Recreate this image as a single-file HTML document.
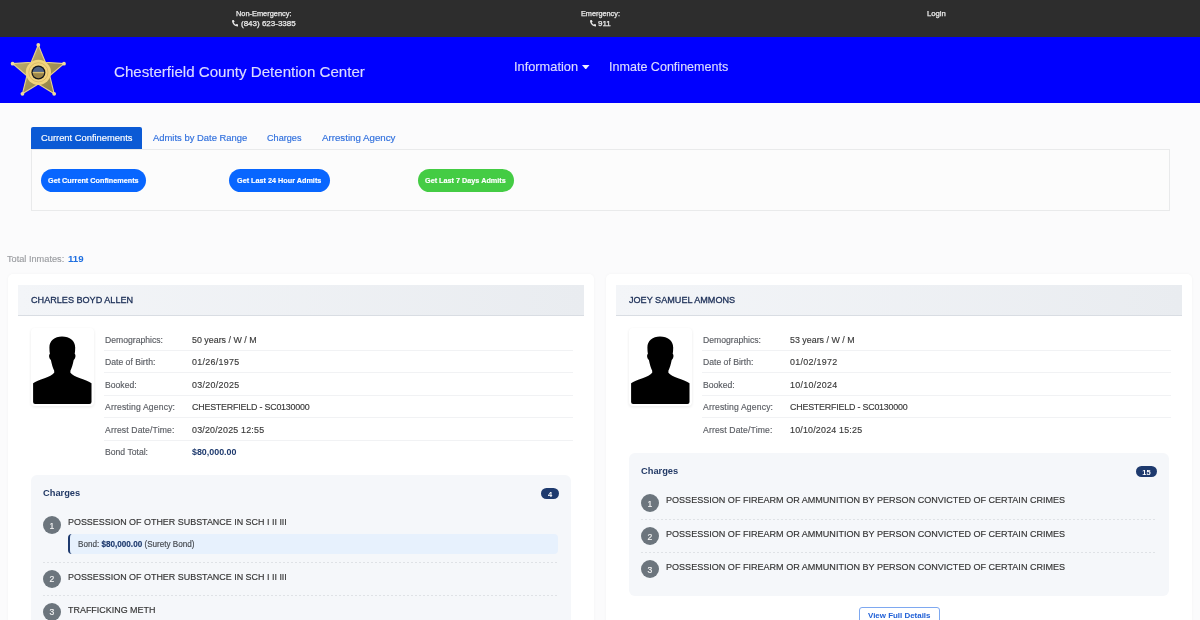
<!DOCTYPE html>
<html><head><meta charset="utf-8"><style>
html,body{margin:0;padding:0;width:1200px;height:620px;overflow:hidden;background:#fbfbfc;font-family:"Liberation Sans", sans-serif}
.t{position:absolute;white-space:nowrap;line-height:1;will-change:transform}
.r{position:absolute;display:block}
b{font-weight:700}
</style></head><body>
<div class="r" style="left:0px;top:0px;width:1200px;height:37px;background:#2d2d2d"></div>
<div class="t" style="left:235.80px;top:10px;font-size:7.4px;color:#ececec;font-weight:400;-webkit-text-stroke:0.15px currentColor;-webkit-text-stroke:0.25px currentColor">Non-Emergency:</div>
<svg class="r" style="left:231.7px;top:20.0px" width="6.5" height="6.5" viewBox="0 0 512 512"><path fill="#e8e8e8" d="M497.4 361.8l-112-48a24 24 0 0 0-28 6.9l-49.6 60.6A370.7 370.7 0 0 1 130.6 204.1l60.6-49.6a23.9 23.9 0 0 0 6.9-28l-48-112A24.2 24.2 0 0 0 122.6.6l-104 24A24 24 0 0 0 0 48c0 256.5 207.9 464 464 464a24 24 0 0 0 23.4-18.6l24-104a24.3 24.3 0 0 0-14-27.6z"/></svg>
<div class="t" style="left:240.80px;top:20px;font-size:8.0px;color:#ececec;font-weight:400;-webkit-text-stroke:0.15px currentColor;-webkit-text-stroke:0.25px currentColor">(843) 623-3385</div>
<div class="t" style="left:580.80px;top:10px;font-size:7.3px;color:#ececec;font-weight:400;-webkit-text-stroke:0.15px currentColor;-webkit-text-stroke:0.25px currentColor">Emergency:</div>
<svg class="r" style="left:589.6px;top:20.0px" width="6.5" height="6.5" viewBox="0 0 512 512"><path fill="#e8e8e8" d="M497.4 361.8l-112-48a24 24 0 0 0-28 6.9l-49.6 60.6A370.7 370.7 0 0 1 130.6 204.1l60.6-49.6a23.9 23.9 0 0 0 6.9-28l-48-112A24.2 24.2 0 0 0 122.6.6l-104 24A24 24 0 0 0 0 48c0 256.5 207.9 464 464 464a24 24 0 0 0 23.4-18.6l24-104a24.3 24.3 0 0 0-14-27.6z"/></svg>
<div class="t" style="left:598.00px;top:20px;font-size:8.0px;color:#ececec;font-weight:400;-webkit-text-stroke:0.15px currentColor;-webkit-text-stroke:0.25px currentColor">911</div>
<div class="t" style="left:927.00px;top:10px;font-size:7.7px;color:#ececec;font-weight:400;-webkit-text-stroke:0.15px currentColor;-webkit-text-stroke:0.25px currentColor">Login</div>
<div class="r" style="left:0px;top:37px;width:1200px;height:66px;background:#0000ff"></div>
<svg class="r" style="left:0px;top:37px" width="80" height="66" viewBox="0 37 80 66">
<defs><linearGradient id="gg" x1="0" y1="0" x2="1" y2="1"><stop offset="0" stop-color="#c9b878"/><stop offset="0.5" stop-color="#a8985a"/><stop offset="1" stop-color="#8a7a40"/></linearGradient></defs>
<polygon points="38.30,45.00 45.35,62.29 63.98,63.66 49.71,75.71 54.17,93.84 38.30,84.00 22.43,93.84 26.89,75.71 12.62,63.66 31.25,62.29" fill="url(#gg)" stroke="#e6d08e" stroke-width="1.1" stroke-linejoin="round"/>
<circle cx="38.30" cy="45.00" r="1.9" fill="#eedc9c"/><circle cx="63.98" cy="63.66" r="1.9" fill="#eedc9c"/><circle cx="54.17" cy="93.84" r="1.9" fill="#eedc9c"/><circle cx="22.43" cy="93.84" r="1.9" fill="#eedc9c"/><circle cx="12.62" cy="63.66" r="1.9" fill="#eedc9c"/>
<circle cx="38.4" cy="72.3" r="12.6" fill="#f2d47c"/>
<circle cx="38.4" cy="72.3" r="9.6" fill="none" stroke="#c9a95a" stroke-width="0.6"/>
<circle cx="38.4" cy="72.5" r="7" fill="#15171c"/>
<path d="M32.7 72.5 A5.7 5.7 0 0 1 44.1 72.5 Z" fill="#4d6186"/>
<path d="M32.7 72.5 A5.7 5.7 0 0 0 44.1 72.5 Z" fill="#9c8648"/>
<rect x="32.7" y="71.9" width="11.4" height="1.3" fill="#d8c070"/>
</svg>
<div class="t" style="left:113.75px;top:64px;font-size:15.1px;color:#dcdcff;font-weight:400;-webkit-text-stroke:0.15px currentColor;">Chesterfield County Detention Center</div>
<div class="t" style="left:514.30px;top:61px;font-size:12.8px;color:#dcdcff;font-weight:400;-webkit-text-stroke:0.15px currentColor;">Information</div>
<svg class="r" style="left:582px;top:64.8px" width="7.5" height="4.5" viewBox="0 0 7.5 4.5"><polygon points="0,0 7.5,0 3.75,4.5" fill="#f0f0ff"/></svg>
<div class="t" style="left:608.80px;top:61px;font-size:12.55px;color:#dcdcff;font-weight:400;-webkit-text-stroke:0.15px currentColor;">Inmate Confinements</div>
<div class="r" style="left:0px;top:103px;width:1200px;height:517px;background:#fbfbfc"></div>
<div class="r" style="left:31px;top:149px;width:1139px;height:62px;background:#fcfcfc;border:1px solid #e9eaeb;box-sizing:border-box"></div>
<div class="r" style="left:31px;top:127px;width:111px;height:22px;background:#0b5ad5;border-radius:2px 2px 0 0"></div>
<div class="t" style="left:40.80px;top:134px;font-size:9.35px;color:#ffffff;font-weight:400;-webkit-text-stroke:0.15px currentColor;">Current Confinements</div>
<div class="t" style="left:152.80px;top:133px;font-size:9.44px;color:#2f6fdd;font-weight:400;-webkit-text-stroke:0.15px currentColor;">Admits by Date Range</div>
<div class="t" style="left:267.20px;top:134px;font-size:9.13px;color:#2f6fdd;font-weight:400;-webkit-text-stroke:0.15px currentColor;">Charges</div>
<div class="t" style="left:322.00px;top:133px;font-size:9.72px;color:#2f6fdd;font-weight:400;-webkit-text-stroke:0.15px currentColor;">Arresting Agency</div>
<div class="r" style="left:41px;top:168.5px;width:105px;height:23px;background:#0866ff;border-radius:11.5px"></div>
<div class="t" style="left:48.10px;top:177px;font-size:7.25px;color:#ffffff;font-weight:700;-webkit-text-stroke:0.15px currentColor">Get Current Confinements</div>
<div class="r" style="left:229px;top:168.5px;width:101px;height:23px;background:#0866ff;border-radius:11.5px"></div>
<div class="t" style="left:236.90px;top:177px;font-size:7.25px;color:#ffffff;font-weight:700;-webkit-text-stroke:0.15px currentColor">Get Last 24 Hour Admits</div>
<div class="r" style="left:418px;top:168.5px;width:96px;height:23px;background:#44cc44;border-radius:11.5px"></div>
<div class="t" style="left:425.00px;top:177px;font-size:7.25px;color:#ffffff;font-weight:700;-webkit-text-stroke:0.15px currentColor">Get Last 7 Days Admits</div>
<div class="t" style="left:7.30px;top:255px;font-size:9.2px;color:#9a9ca0;font-weight:400;-webkit-text-stroke:0.15px currentColor;">Total Inmates:</div>
<div class="t" style="left:68.30px;top:254px;font-size:9.7px;color:#1f6fe0;font-weight:700;">119</div>
<div class="r" style="left:8px;top:274px;width:586px;height:366px;background:#fff;border-radius:5px;box-shadow:0 0 3px rgba(0,0,0,0.04)"></div>
<div class="r" style="left:18px;top:285px;width:566px;height:31px;background:linear-gradient(90deg,#f3f5f8,#e9ecf0);border-bottom:1px solid #d9dde3;box-sizing:border-box"></div>
<div class="t" style="left:31.00px;top:296px;font-size:9.1px;color:#1c2f57;font-weight:400;-webkit-text-stroke:0.15px currentColor;-webkit-text-stroke:0.3px currentColor">CHARLES BOYD ALLEN</div>
<div class="r" style="left:30.5px;top:328px;width:63px;height:78px;background:#fff;border-radius:4px;box-shadow:0 1px 3px rgba(0,0,0,0.09)"><svg width="63" height="78" viewBox="0 0 63 78"><path fill="#000" d="M31 8.6 C23.6 8.6 18.4 13 18.4 19.5 C18.4 22 18.6 24 18.9 26 C17.6 26.5 17.9 30.5 19.9 32 C20.7 36.2 21.9 40 23.2 42.8 L23.2 44.8 C21.5 47.2 18 48.5 13.5 50.2 C8.5 52 4.5 53.4 2.1 55.2 L2.1 74 Q2.1 76 4.1 76 L58.5 76 Q60.5 76 60.5 74 L60.5 55.2 C58.1 53.4 54.1 52 49.1 50.2 C44.6 48.5 41.1 47.2 39.4 44.8 L39.4 42.8 C40.7 40 41.9 36.2 42.7 32 C44.7 30.5 45 26.5 43.7 26 C44 24 44.2 22 44.2 19.5 C44.2 13 38.8 8.6 31 8.6 Z"/></svg></div>
<div class="t" style="left:104.50px;top:336px;font-size:8.65px;color:#5a5d63;font-weight:400;-webkit-text-stroke:0.15px currentColor;letter-spacing:0px">Demographics:</div>
<div class="t" style="left:192.00px;top:336px;font-size:8.9px;color:#3a3a3a;font-weight:400;-webkit-text-stroke:0.15px currentColor;letter-spacing:0px">50 years / W / M</div>
<div class="r" style="left:104px;top:350px;width:469px;height:1px;background:#f1f2f4"></div>
<div class="t" style="left:104.50px;top:358px;font-size:8.65px;color:#5a5d63;font-weight:400;-webkit-text-stroke:0.15px currentColor;letter-spacing:0px">Date of Birth:</div>
<div class="t" style="left:192.00px;top:358px;font-size:8.9px;color:#3a3a3a;font-weight:400;-webkit-text-stroke:0.15px currentColor;letter-spacing:0.3px">01/26/1975</div>
<div class="r" style="left:104px;top:372px;width:469px;height:1px;background:#f1f2f4"></div>
<div class="t" style="left:104.50px;top:381px;font-size:8.65px;color:#5a5d63;font-weight:400;-webkit-text-stroke:0.15px currentColor;letter-spacing:0px">Booked:</div>
<div class="t" style="left:192.00px;top:381px;font-size:8.9px;color:#3a3a3a;font-weight:400;-webkit-text-stroke:0.15px currentColor;letter-spacing:0.3px">03/20/2025</div>
<div class="r" style="left:104px;top:395px;width:469px;height:1px;background:#f1f2f4"></div>
<div class="t" style="left:104.50px;top:403px;font-size:8.65px;color:#5a5d63;font-weight:400;-webkit-text-stroke:0.15px currentColor;letter-spacing:0.15px">Arresting Agency:</div>
<div class="t" style="left:192.00px;top:403px;font-size:8.9px;color:#3a3a3a;font-weight:400;-webkit-text-stroke:0.15px currentColor;letter-spacing:-0.2px">CHESTERFIELD - SC0130000</div>
<div class="r" style="left:104px;top:417px;width:469px;height:1px;background:#f1f2f4"></div>
<div class="t" style="left:104.50px;top:426px;font-size:8.65px;color:#5a5d63;font-weight:400;-webkit-text-stroke:0.15px currentColor;letter-spacing:0.13px">Arrest Date/Time:</div>
<div class="t" style="left:192.00px;top:426px;font-size:8.9px;color:#3a3a3a;font-weight:400;-webkit-text-stroke:0.15px currentColor;letter-spacing:0.2px">03/20/2025 12:55</div>
<div class="r" style="left:104px;top:440px;width:469px;height:1px;background:#f1f2f4"></div>
<div class="t" style="left:104.50px;top:448px;font-size:8.65px;color:#5a5d63;font-weight:400;-webkit-text-stroke:0.15px currentColor;letter-spacing:0px">Bond Total:</div>
<div class="t" style="left:192.00px;top:448px;font-size:8.9px;color:#1e3a6e;font-weight:700;letter-spacing:0px">$80,000.00</div>
<div class="r" style="left:31px;top:475px;width:539.5px;height:185px;background:#f5f7fa;border-radius:6px"></div>
<div class="t" style="left:43.00px;top:489px;font-size:9.3px;color:#233a66;font-weight:700;">Charges</div>
<div class="r" style="left:541px;top:488.4px;width:18px;height:11.0px;background:#1e3a6e;border-radius:6px"></div>
<div class="t" style="left:541.00px;top:491px;font-size:7.5px;color:#fff;font-weight:700;width:18px;text-align:center">4</div>
<div class="r" style="left:43.2px;top:516.3px;width:18.0px;height:18.0px;background:#6c757d;border-radius:50%"></div>
<div class="t" style="left:43.20px;top:522px;font-size:8.6px;color:#f4f4f4;font-weight:400;-webkit-text-stroke:0.15px currentColor;width:18px;text-align:center">1</div>
<div class="t" style="left:68.40px;top:518px;font-size:8.95px;color:#333;font-weight:400;-webkit-text-stroke:0.15px currentColor;">POSSESSION OF OTHER SUBSTANCE IN SCH I II III</div>
<div class="r" style="left:43px;top:562px;width:516px;height:1px;background:repeating-linear-gradient(90deg,#dfe2e6 0 2px,transparent 2px 4px)"></div>
<div class="r" style="left:43.2px;top:569.8px;width:18.0px;height:18.0px;background:#6c757d;border-radius:50%"></div>
<div class="t" style="left:43.20px;top:575px;font-size:8.6px;color:#f4f4f4;font-weight:400;-webkit-text-stroke:0.15px currentColor;width:18px;text-align:center">2</div>
<div class="t" style="left:68.40px;top:573px;font-size:8.95px;color:#333;font-weight:400;-webkit-text-stroke:0.15px currentColor;">POSSESSION OF OTHER SUBSTANCE IN SCH I II III</div>
<div class="r" style="left:43px;top:595px;width:516px;height:1px;background:repeating-linear-gradient(90deg,#dfe2e6 0 2px,transparent 2px 4px)"></div>
<div class="r" style="left:43.2px;top:602.6px;width:18.0px;height:18.0px;background:#6c757d;border-radius:50%"></div>
<div class="t" style="left:43.20px;top:608px;font-size:8.6px;color:#f4f4f4;font-weight:400;-webkit-text-stroke:0.15px currentColor;width:18px;text-align:center">3</div>
<div class="t" style="left:68.40px;top:606px;font-size:8.95px;color:#333;font-weight:400;-webkit-text-stroke:0.15px currentColor;">TRAFFICKING METH</div>
<div class="r" style="left:68.4px;top:534px;width:490.1px;height:20.399999999999977px;background:#e7f1fd;border-left:2px solid #1e3a6e;border-radius:4px;box-sizing:border-box"></div>
<div class="t" style="left:78.00px;top:541px;font-size:8.15px;color:#44484e;font-weight:400;-webkit-text-stroke:0.15px currentColor;">Bond: <b style="color:#1e3a6e">$80,000.00</b> (Surety Bond)</div>
<div class="r" style="left:606px;top:274px;width:586px;height:366px;background:#fff;border-radius:5px;box-shadow:0 0 3px rgba(0,0,0,0.04)"></div>
<div class="r" style="left:616px;top:285px;width:566px;height:31px;background:linear-gradient(90deg,#f3f5f8,#e9ecf0);border-bottom:1px solid #d9dde3;box-sizing:border-box"></div>
<div class="t" style="left:629.00px;top:296px;font-size:9.1px;color:#1c2f57;font-weight:400;-webkit-text-stroke:0.15px currentColor;-webkit-text-stroke:0.3px currentColor">JOEY SAMUEL AMMONS</div>
<div class="r" style="left:628.5px;top:328px;width:63px;height:78px;background:#fff;border-radius:4px;box-shadow:0 1px 3px rgba(0,0,0,0.09)"><svg width="63" height="78" viewBox="0 0 63 78"><path fill="#000" d="M31 8.6 C23.6 8.6 18.4 13 18.4 19.5 C18.4 22 18.6 24 18.9 26 C17.6 26.5 17.9 30.5 19.9 32 C20.7 36.2 21.9 40 23.2 42.8 L23.2 44.8 C21.5 47.2 18 48.5 13.5 50.2 C8.5 52 4.5 53.4 2.1 55.2 L2.1 74 Q2.1 76 4.1 76 L58.5 76 Q60.5 76 60.5 74 L60.5 55.2 C58.1 53.4 54.1 52 49.1 50.2 C44.6 48.5 41.1 47.2 39.4 44.8 L39.4 42.8 C40.7 40 41.9 36.2 42.7 32 C44.7 30.5 45 26.5 43.7 26 C44 24 44.2 22 44.2 19.5 C44.2 13 38.8 8.6 31 8.6 Z"/></svg></div>
<div class="t" style="left:702.50px;top:336px;font-size:8.65px;color:#5a5d63;font-weight:400;-webkit-text-stroke:0.15px currentColor;letter-spacing:0px">Demographics:</div>
<div class="t" style="left:790.00px;top:336px;font-size:8.9px;color:#3a3a3a;font-weight:400;-webkit-text-stroke:0.15px currentColor;letter-spacing:0px">53 years / W / M</div>
<div class="r" style="left:702px;top:350px;width:469px;height:1px;background:#f1f2f4"></div>
<div class="t" style="left:702.50px;top:358px;font-size:8.65px;color:#5a5d63;font-weight:400;-webkit-text-stroke:0.15px currentColor;letter-spacing:0px">Date of Birth:</div>
<div class="t" style="left:790.00px;top:358px;font-size:8.9px;color:#3a3a3a;font-weight:400;-webkit-text-stroke:0.15px currentColor;letter-spacing:0.3px">01/02/1972</div>
<div class="r" style="left:702px;top:372px;width:469px;height:1px;background:#f1f2f4"></div>
<div class="t" style="left:702.50px;top:381px;font-size:8.65px;color:#5a5d63;font-weight:400;-webkit-text-stroke:0.15px currentColor;letter-spacing:0px">Booked:</div>
<div class="t" style="left:790.00px;top:381px;font-size:8.9px;color:#3a3a3a;font-weight:400;-webkit-text-stroke:0.15px currentColor;letter-spacing:0.3px">10/10/2024</div>
<div class="r" style="left:702px;top:395px;width:469px;height:1px;background:#f1f2f4"></div>
<div class="t" style="left:702.50px;top:403px;font-size:8.65px;color:#5a5d63;font-weight:400;-webkit-text-stroke:0.15px currentColor;letter-spacing:0.15px">Arresting Agency:</div>
<div class="t" style="left:790.00px;top:403px;font-size:8.9px;color:#3a3a3a;font-weight:400;-webkit-text-stroke:0.15px currentColor;letter-spacing:-0.2px">CHESTERFIELD - SC0130000</div>
<div class="r" style="left:702px;top:417px;width:469px;height:1px;background:#f1f2f4"></div>
<div class="t" style="left:702.50px;top:426px;font-size:8.65px;color:#5a5d63;font-weight:400;-webkit-text-stroke:0.15px currentColor;letter-spacing:0.13px">Arrest Date/Time:</div>
<div class="t" style="left:790.00px;top:426px;font-size:8.9px;color:#3a3a3a;font-weight:400;-webkit-text-stroke:0.15px currentColor;letter-spacing:0.2px">10/10/2024 15:25</div>
<div class="r" style="left:629px;top:453px;width:539.5px;height:143px;background:#f5f7fa;border-radius:6px"></div>
<div class="t" style="left:641.00px;top:467px;font-size:9.3px;color:#233a66;font-weight:700;">Charges</div>
<div class="r" style="left:1136px;top:466.4px;width:21px;height:11.0px;background:#1e3a6e;border-radius:6px"></div>
<div class="t" style="left:1136.00px;top:469px;font-size:7.5px;color:#fff;font-weight:700;width:21px;text-align:center">15</div>
<div class="r" style="left:641.2px;top:494px;width:18.0px;height:18px;background:#6c757d;border-radius:50%"></div>
<div class="t" style="left:641.20px;top:500px;font-size:8.6px;color:#f4f4f4;font-weight:400;-webkit-text-stroke:0.15px currentColor;width:18px;text-align:center">1</div>
<div class="t" style="left:666.40px;top:496px;font-size:9.05px;color:#333;font-weight:400;-webkit-text-stroke:0.15px currentColor;">POSSESSION OF FIREARM OR AMMUNITION BY PERSON CONVICTED OF CERTAIN CRIMES</div>
<div class="r" style="left:641px;top:519px;width:516px;height:1px;background:repeating-linear-gradient(90deg,#dfe2e6 0 2px,transparent 2px 4px)"></div>
<div class="r" style="left:641.2px;top:527px;width:18.0px;height:18px;background:#6c757d;border-radius:50%"></div>
<div class="t" style="left:641.20px;top:533px;font-size:8.6px;color:#f4f4f4;font-weight:400;-webkit-text-stroke:0.15px currentColor;width:18px;text-align:center">2</div>
<div class="t" style="left:666.40px;top:530px;font-size:9.05px;color:#333;font-weight:400;-webkit-text-stroke:0.15px currentColor;">POSSESSION OF FIREARM OR AMMUNITION BY PERSON CONVICTED OF CERTAIN CRIMES</div>
<div class="r" style="left:641px;top:552px;width:516px;height:1px;background:repeating-linear-gradient(90deg,#dfe2e6 0 2px,transparent 2px 4px)"></div>
<div class="r" style="left:641.2px;top:560px;width:18.0px;height:18px;background:#6c757d;border-radius:50%"></div>
<div class="t" style="left:641.20px;top:566px;font-size:8.6px;color:#f4f4f4;font-weight:400;-webkit-text-stroke:0.15px currentColor;width:18px;text-align:center">3</div>
<div class="t" style="left:666.40px;top:563px;font-size:9.05px;color:#333;font-weight:400;-webkit-text-stroke:0.15px currentColor;">POSSESSION OF FIREARM OR AMMUNITION BY PERSON CONVICTED OF CERTAIN CRIMES</div>
<div class="r" style="left:859px;top:607px;width:81px;height:23px;background:#fff;border:1px solid #7ea8f0;border-radius:3px;box-sizing:border-box"></div>
<div class="t" style="left:868.00px;top:612px;font-size:7.95px;color:#1f5fd6;font-weight:700;">View Full Details</div>
</body></html>
